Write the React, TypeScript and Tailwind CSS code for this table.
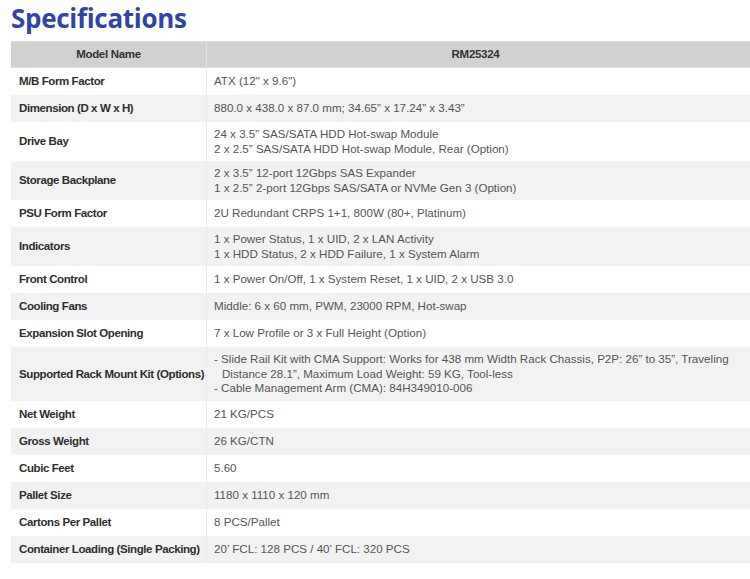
const specs: { label: string; value: string[]; indent?: number[] }[] = [
  { label: "M/B Form Factor", value: ['ATX (12" x 9.6")'] },
  { label: "Dimension (D x W x H)", value: ["880.0 x 438.0 x 87.0 mm; 34.65\u201d x 17.24\u201d x 3.43\u201d"] },
  {
    label: "Drive Bay",
    value: ["24 x 3.5\u201d SAS/SATA HDD Hot-swap Module", "2 x 2.5\u201d SAS/SATA HDD Hot-swap Module, Rear (Option)"],
  },
  {
    label: "Storage Backplane",
    value: ["2 x 3.5\u201d 12-port 12Gbps SAS Expander", "1 x 2.5\u201d 2-port 12Gbps SAS/SATA or NVMe Gen 3 (Option)"],
  },
  { label: "PSU Form Factor", value: ["2U Redundant CRPS 1+1, 800W (80+, Platinum)"] },
  {
    label: "Indicators",
    value: ["1 x Power Status, 1 x UID, 2 x LAN Activity", "1 x HDD Status, 2 x HDD Failure, 1 x System Alarm"],
  },
  { label: "Front Control", value: ["1 x Power On/Off, 1 x System Reset, 1 x UID, 2 x USB 3.0"] },
  { label: "Cooling Fans", value: ["Middle: 6 x 60 mm, PWM, 23000 RPM, Hot-swap"] },
  { label: "Expansion Slot Opening", value: ["7 x Low Profile or 3 x Full Height (Option)"] },
  {
    label: "Supported Rack Mount Kit (Options)",
    value: [
      "- Slide Rail Kit with CMA Support: Works for 438 mm Width Rack Chassis, P2P: 26\u201d to 35\u201d, Traveling",
      "Distance 28.1\u201d, Maximum Load Weight: 59 KG, Tool-less",
      "- Cable Management Arm (CMA): 84H349010-006",
    ],
    indent: [1],
  },
  { label: "Net Weight", value: ["21 KG/PCS"] },
  { label: "Gross Weight", value: ["26 KG/CTN"] },
  { label: "Cubic Feet", value: ["5.60"] },
  { label: "Pallet Size", value: ["1180 x 1110 x 120 mm"] },
  { label: "Cartons Per Pallet", value: ["8 PCS/Pallet"] },
  { label: "Container Loading (Single Packing)", value: ["20\u2019 FCL: 128 PCS / 40\u2019 FCL: 320 PCS"] },
];

export default function App() {
  return (
    <div className="w-[750px] h-[579px] bg-white overflow-hidden font-['Liberation_Sans',Arial,sans-serif]">
      {/* Title */}
      <h1 className="pl-[11px] pt-[1px] h-[41px] text-[26px] leading-[34px] font-bold text-[#2f44a6] font-['Open_Sans',sans-serif] tracking-[-0.3px]">
        Specifications
      </h1>

      {/* Spec table */}
      <div className="ml-[11px] text-[11.6px] leading-[14.5px]">
        <div className="grid grid-cols-[196px_1fr] h-[27px] bg-[#d1d1d1] border-y border-[#dcdcdc] font-bold text-[#333]">
          <div className="flex items-center justify-center border-r border-[#e2e2e2] text-[11.5px] tracking-[-0.3px]">
            Model Name
          </div>
          <div className="flex items-center justify-center pr-[6px] text-[11.5px] tracking-[-0.3px]">RM25324</div>
        </div>
        {specs.map((row, i) => (
          <div
            key={row.label}
            className={`grid grid-cols-[196px_1fr] ${i % 2 === 0 ? "bg-white" : "bg-[#f2f2f2]"}`}
          >
            <div className="flex items-center pl-[8px] border-r border-[#ececec] font-bold text-[#2e2e2e] text-[11.5px] tracking-[-0.4px] whitespace-nowrap">
              {row.label}
            </div>
            <div className="flex flex-col justify-center py-[5px] pl-[7px] text-[#555] min-h-[27px]">
              {row.value.map((line, j) => (
                <div key={j} className={`whitespace-nowrap ${row.indent?.includes(j) ? "pl-[8px]" : ""}`}>
                  {line}
                </div>
              ))}
            </div>
          </div>
        ))}
      </div>
    </div>
  );
}
